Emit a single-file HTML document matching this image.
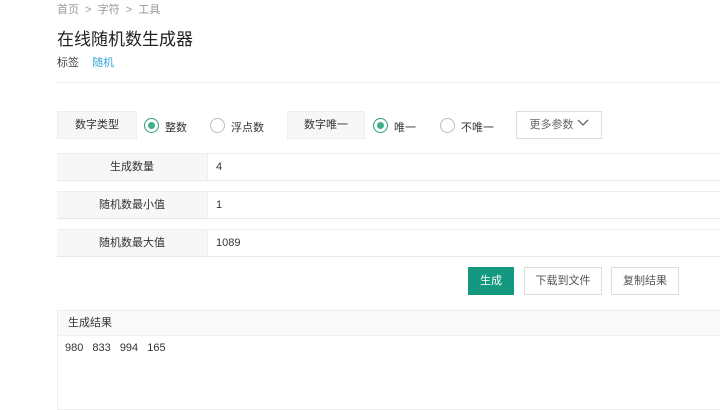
<!DOCTYPE html>
<html><head><meta charset="utf-8"><style>
*{margin:0;padding:0;box-sizing:border-box}
body{width:720px;height:410px;overflow:hidden;background:#fff;font-family:"Liberation Sans","Noto Sans CJK SC",sans-serif;color:#333;position:relative;font-size:11px}
.a{position:absolute;white-space:nowrap}
.lb{position:absolute;background:#f7f7f7;border:1px solid #eee;text-align:center;line-height:26px}
.r{position:absolute;width:15px;height:15px;border-radius:50%;border:1px solid #bbb;background:#fff}
.r.on{border-color:#2a9d7c}
.r.on::after{content:"";position:absolute;left:3px;top:3px;width:7px;height:7px;border-radius:50%;background:#3fae8a}
.row{position:absolute;left:57px;right:0;height:28px;border-top:1px solid #eee;border-bottom:1px solid #e8e8e8}
.row .k{position:absolute;left:0;top:0;width:151px;height:26px;background:#f7f7f7;border-right:1px solid #eee;text-align:center;line-height:26px}
.row .v{position:absolute;left:159px;line-height:26px}
.btn{position:absolute;height:28px;border:1px solid #ddd;background:#fff;text-align:center;line-height:26px;color:#555}
</style></head><body>
<div class="a" style="left:57px;top:1px;font-size:11px;color:#999">首页 &nbsp;&gt;&nbsp; 字符 &nbsp;&gt;&nbsp; 工具</div>
<div class="a" style="left:57px;top:25px;font-size:17px;color:#222">在线随机数生成器</div>
<div class="a" style="left:57px;top:54px;font-size:11px;color:#444">标签 <span style="color:#3aa6d8;margin-left:10px">随机</span></div>
<div class="a" style="left:57px;top:82px;width:663px;height:1px;background:#eee"></div>

<div class="lb" style="left:57px;top:111px;width:80px;height:28px">数字类型</div>
<div class="r on" style="left:144px;top:118px"></div>
<div class="a" style="left:165px;top:119px">整数</div>
<div class="r" style="left:210px;top:118px"></div>
<div class="a" style="left:231px;top:119px">浮点数</div>
<div class="lb" style="left:287px;top:111px;width:78px;height:28px">数字唯一</div>
<div class="r on" style="left:373px;top:118px"></div>
<div class="a" style="left:394px;top:119px">唯一</div>
<div class="r" style="left:440px;top:118px"></div>
<div class="a" style="left:461px;top:119px">不唯一</div>
<div class="btn" style="left:516px;top:111px;width:86px;color:#666">更多参数 <svg width="12" height="8" viewBox="0 0 12 8" style="vertical-align:1px"><path d="M1 1l5 5 5-5" stroke="#666" stroke-width="1.3" fill="none"/></svg></div>

<div class="row" style="top:153px"><div class="k">生成数量</div><div class="v">4</div></div>
<div class="row" style="top:191px"><div class="k">随机数最小值</div><div class="v">1</div></div>
<div class="row" style="top:229px"><div class="k">随机数最大值</div><div class="v">1089</div></div>

<div class="btn" style="left:468px;top:267px;width:46px;background:#14987f;border-color:#14987f;color:#fff">生成</div>
<div class="btn" style="left:524px;top:267px;width:78px">下载到文件</div>
<div class="btn" style="left:611px;top:267px;width:68px">复制结果</div>

<div class="a" style="left:57px;top:310px;width:663px;height:100px;border:1px solid #eee;border-right:none"></div>
<div class="a" style="left:58px;top:311px;width:662px;height:25px;background:#f9f9f9;border-bottom:1px solid #eee;padding-left:10px;line-height:25px">生成结果</div>
<div class="a" style="left:65px;top:342px;word-spacing:6px">980 833 994 165</div>
</body></html>
